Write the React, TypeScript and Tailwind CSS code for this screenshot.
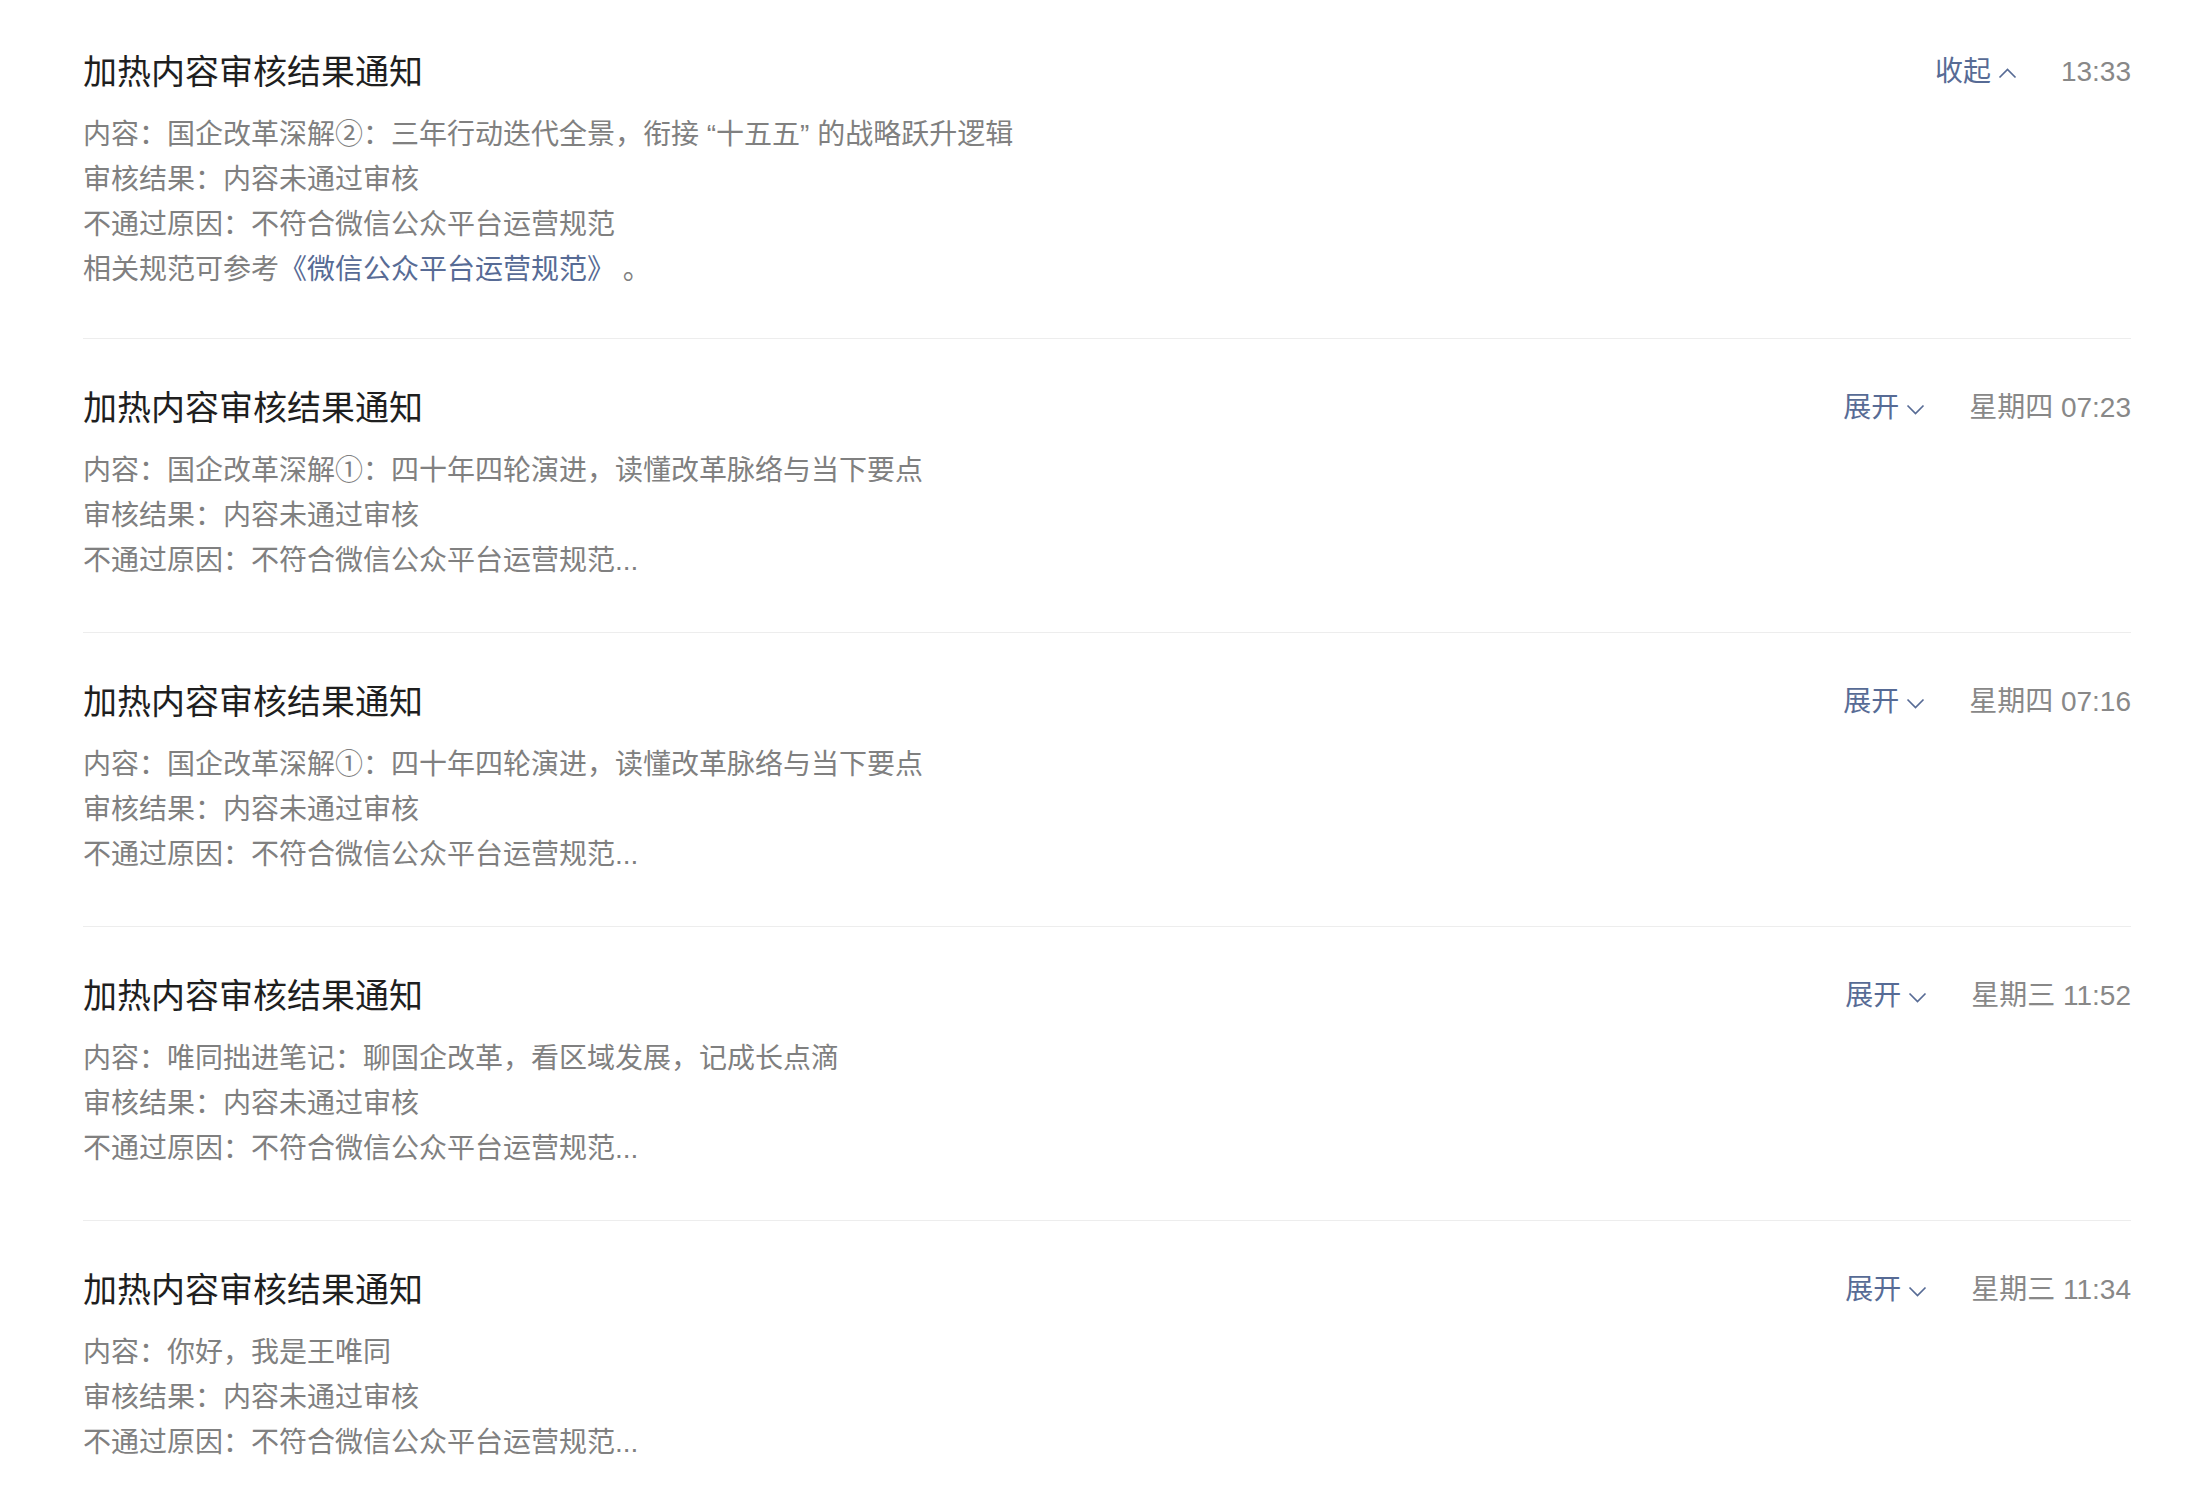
import { ReactNode } from "react";

type Notice = {
  time: string;
  expanded: boolean;
  lines: ReactNode[];
};

const notices: Notice[] = [
  {
    time: "13:33",
    expanded: true,
    lines: [
      "内容：国企改革深解②：三年行动迭代全景，衔接 “十五五” 的战略跃升逻辑",
      "审核结果：内容未通过审核",
      "不通过原因：不符合微信公众平台运营规范",
      <>
        相关规范可参考
        <a className="text-[#576b95]" href="#">
          《微信公众平台运营规范》
        </a>{" "}
        。
      </>,
    ],
  },
  {
    time: "星期四 07:23",
    expanded: false,
    lines: [
      "内容：国企改革深解①：四十年四轮演进，读懂改革脉络与当下要点",
      "审核结果：内容未通过审核",
      "不通过原因：不符合微信公众平台运营规范...",
    ],
  },
  {
    time: "星期四 07:16",
    expanded: false,
    lines: [
      "内容：国企改革深解①：四十年四轮演进，读懂改革脉络与当下要点",
      "审核结果：内容未通过审核",
      "不通过原因：不符合微信公众平台运营规范...",
    ],
  },
  {
    time: "星期三 11:52",
    expanded: false,
    lines: [
      "内容：唯同拙进笔记：聊国企改革，看区域发展，记成长点滴",
      "审核结果：内容未通过审核",
      "不通过原因：不符合微信公众平台运营规范...",
    ],
  },
  {
    time: "星期三 11:34",
    expanded: false,
    lines: [
      "内容：你好，我是王唯同",
      "审核结果：内容未通过审核",
      "不通过原因：不符合微信公众平台运营规范...",
    ],
  },
];

function Chevron({ up }: { up: boolean }) {
  return (
    <svg width="19" height="11" viewBox="0 0 19 11" className="mt-[2px]">
      <polyline
        points={up ? "1.5,9.5 9.5,1.5 17.5,9.5" : "1.5,1.5 9.5,9.5 17.5,1.5"}
        fill="none"
        stroke="#576b95"
        strokeWidth="1.7"
      />
    </svg>
  );
}

function NoticeItem({ n }: { n: Notice }) {
  return (
    <div className="border-b border-[#ededed] pt-[45px] pb-[49px] first:pt-[48px] first:pb-[46px] last:border-b-0">
      <div className="flex items-center justify-between h-[48px]">
        <h3 className="text-[34px] leading-[48px] text-[#1f1f1f] font-normal">
          加热内容审核结果通知
        </h3>
        <div className="flex items-center">
          <button className="flex items-center gap-[7px] text-[28px] leading-[40px] text-[#576b95]">
            {n.expanded ? "收起" : "展开"}
            <Chevron up={n.expanded} />
          </button>
          <span className="ml-[44px] text-[28px] leading-[40px] text-[#888888]">
            {n.time}
          </span>
        </div>
      </div>
      <div className="mt-[16px] text-[28px] leading-[45px] text-[#808080]">
        {n.lines.map((line, i) => (
          <p key={i}>{line}</p>
        ))}
      </div>
    </div>
  );
}

export default function App() {
  return (
    <div
      className="min-h-screen bg-white pl-[83px] pr-[69px]"
      style={{ fontFamily: '"Liberation Sans", "Noto Sans CJK SC", sans-serif' }}
    >
      {notices.map((n, i) => (
        <NoticeItem key={i} n={n} />
      ))}
    </div>
  );
}
